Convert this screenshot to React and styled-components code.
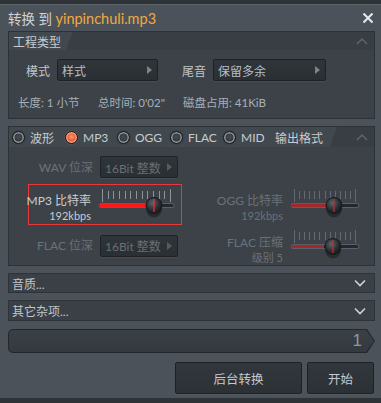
import React from "react";
import styled, { createGlobalStyle } from "styled-components";

const GlobalStyle = createGlobalStyle`
  html, body {
    margin: 0;
    padding: 0;
    background: #2b2f34;
  }
  body {
    font-family: "Lato", "Noto Sans CJK SC", sans-serif;
  }
`;

const Strip = styled.div`
  height: ${(p) => p.$h}px;
  width: 381px;
  background: #2e3338;
`;

const Window = styled.div`
  width: 381px;
  height: 394px;
  box-sizing: border-box;
  background: #4b525a;
  border-top: 1px solid #5c646b;
  display: flex;
  flex-direction: column;
  padding: 0 6px 0 8px;
`;

const TitleBar = styled.div`
  height: 26px;
  display: flex;
  align-items: center;
  justify-content: space-between;
  padding-right: 1px;
`;

const Title = styled.div`
  font-size: 13.5px;
  color: #cfd4d9;
  white-space: pre;
  & span {
    color: #f2a93b;
    font-size: 14.5px;
  }
`;

const Panel = styled.div`
  height: ${(p) => p.$h}px;
  margin-top: ${(p) => p.$mt || 0}px;
  box-sizing: border-box;
  background: #3c4248;
  border: 1px solid #2d3237;
  display: flex;
  flex-direction: column;
`;

const PanelHead = styled.div`
  height: ${(p) => p.$h}px;
  flex: none;
  display: flex;
  align-items: center;
  background: #383e44;
  padding-right: 6px;
`;

const Tab = styled.div`
  flex: none;
  white-space: nowrap;
  height: 100%;
  display: flex;
  align-items: center;
  padding: 0 ${(p) => p.$pr}px 0 ${(p) => p.$pl}px;
  background: #41484e;
  color: #c6ccd1;
  font-size: 12px;
  clip-path: polygon(0 0, 100% 0, calc(100% - 7px) 100%, 0 100%);
`;

const Caret = styled.svg`
  margin-left: auto;
`;

const Body1 = styled.div`
  padding: 9px 0 0 17px;
  display: flex;
  flex-direction: column;
`;

const Row = styled.div`
  display: flex;
  align-items: center;
`;

const FieldLabel = styled.span`
  font-size: 12px;
  color: #bfc6cc;
  margin: 0 7px 0 ${(p) => p.$ml || 0}px;
`;

const Select = styled.div`
  width: ${(p) => p.$w}px;
  height: 22px;
  box-sizing: border-box;
  background: linear-gradient(#30353a, #2a2f34);
  border: 1px solid #1e2226;
  border-radius: 2px;
  box-shadow: 0 1px 0 rgba(255, 255, 255, 0.05);
  display: flex;
  align-items: center;
  justify-content: space-between;
  padding: 0 5px 0 4px;
  font-size: 12px;
  white-space: nowrap;
  color: ${(p) => (p.$dim ? "#687077" : "#b7bec4")};
  &::after {
    content: "";
    border-left: 5px solid ${(p) => (p.$dim ? "#555c63" : "#7d858c")};
    border-top: 4px solid transparent;
    border-bottom: 4px solid transparent;
  }
`;

const InfoRow = styled.div`
  display: flex;
  margin: 13px 0 0 -8px;
  font-size: 11.5px;
  color: #a7afb6;
  white-space: nowrap;
`;

const InfoItem = styled.span`
  width: ${(p) => p.$w}px;
`;

const RadioItem = styled.span`
  display: flex;
  align-items: center;
  gap: 5px;
  width: ${(p) => p.$w}px;
`;

const Radio = styled.span`
  width: 13px;
  height: 13px;
  box-sizing: border-box;
  border-radius: 50%;
  border: 1px solid #1c1f22;
  background: ${(p) =>
    p.$on
      ? "radial-gradient(circle at 50% 45%, #ff9a72 0%, #ec5d33 45%, #b8361a 100%)"
      : "radial-gradient(circle at 50% 45%, #454b51 0%, #30353a 70%)"};
  box-shadow: inset 0 0 0 1.5px ${(p) => (p.$on ? "#f0a184" : "#8e969c")},
    0 0 2px ${(p) => (p.$on ? "rgba(255,120,80,0.5)" : "rgba(0,0,0,0.3)")};
`;

const Body2 = styled.div`
  padding: 9px 0 0 20px;
  display: grid;
  grid-template-columns: 153px 1fr;
  grid-template-rows: 22px 41px 29px;
  row-gap: 6px;
  column-gap: 26px;
`;

const Cell = styled.div`
  display: flex;
  align-items: center;
  box-sizing: border-box;
  border: 1px solid ${(p) => (p.$hl ? "#e5393a" : "transparent")};
  margin-left: ${(p) => (p.$hl ? -1 : 0)}px;
`;

const Label = styled.div`
  width: ${(p) => p.$w}px;
  flex: none;
  display: flex;
  flex-direction: column;
  align-items: flex-end;
  white-space: nowrap;
  margin-right: 7px;
  font-size: 12px;
  line-height: 15px;
  color: ${(p) => (p.$dim ? "#6a7279" : "#c9cfd4")};
  margin-top: ${(p) => p.$mt || 0}px;
`;

const Sub = styled.div`
  font-size: 11px;
  color: ${(p) => (p.$dim ? "#697178" : "#c6ccd1")};
`;

const Bar = styled.div`
  height: ${(p) => p.$h}px;
  margin-top: 7px;
  box-sizing: border-box;
  background: #3a4046;
  border: 1px solid #2e3338;
  display: flex;
  align-items: center;
  justify-content: space-between;
  padding: 0 8px 0 3px;
  font-size: 12px;
  color: #bfc6cc;
`;

const ProgressOuter = styled.div`
  height: 24px;
  margin-top: 8px;
  background: #23272b;
  border-radius: 5px 0 0 5px;
  clip-path: polygon(0 0, calc(100% - 8px) 0, 100% 50%, calc(100% - 8px) 100%, 0 100%);
  display: flex;
`;

const ProgressInner = styled.div`
  flex: 1;
  margin: 1px;
  border-radius: 4px 0 0 4px;
  background: linear-gradient(#3a4046, #33393f);
  clip-path: polygon(0 0, calc(100% - 8px) 0, 100% 50%, calc(100% - 8px) 100%, 0 100%);
  display: flex;
  align-items: center;
  justify-content: flex-end;
  padding-right: 12px;
  font-family: "Liberation Sans", sans-serif;
  font-size: 17px;
  font-weight: 300;
  color: #8f989f;
`;

const Buttons = styled.div`
  display: flex;
  justify-content: flex-end;
  gap: 5px;
  margin-top: 9px;
  padding-right: 1px;
`;

const Button = styled.button`
  width: ${(p) => p.$w}px;
  height: 32px;
  background: linear-gradient(#31373c, #2c3136);
  border: 1px solid #1d2125;
  border-radius: 2px;
  box-shadow: 0 1px 0 rgba(255, 255, 255, 0.05);
  font-family: "Noto Sans CJK SC", sans-serif;
  font-size: 12.5px;
  color: #c4cacf;
  padding: 0;
`;

const UpCaret = () => (
  <Caret width="12" height="8" viewBox="0 0 12 8">
    <polyline points="1,7 6,2 11,7" fill="none" stroke="#5d656c" strokeWidth="1.5" />
  </Caret>
);

const DownCaret = () => (
  <svg width="12" height="8" viewBox="0 0 12 8">
    <polyline points="1,1.5 6,6.5 11,1.5" fill="none" stroke="#cdd3d8" strokeWidth="1.6" />
  </svg>
);

const Slider = ({ w, knob, fill, dim }) => {
  const n = 13;
  const t0 = 4;
  const t1 = w - 5;
  const ticks = Array.from({ length: n }, (_, i) => t0 + ((t1 - t0) * i) / (n - 1));
  const tickCol = dim ? "#626a71" : "#8c949a";
  const red = dim ? "#a3282b" : "#ff1616";
  const id = `k${w}${knob}${dim ? "d" : "a"}`;
  return (
    <svg width={w} height="32" viewBox={`0 0 ${w} 32`}>
      <defs>
        <radialGradient id={id} cx="40%" cy="35%" r="70%">
          <stop offset="0%" stopColor="#5d646a" />
          <stop offset="60%" stopColor="#2a2e32" />
          <stop offset="100%" stopColor="#15181a" />
        </radialGradient>
      </defs>
      {ticks.map((x, i) => (
        <line
          key={i}
          x1={Math.round(x) + 0.5}
          x2={Math.round(x) + 0.5}
          y1={i === 0 || i === n - 1 ? 0 : 2}
          y2={i === 0 || i === n - 1 ? 13 : 10}
          stroke={tickCol}
          strokeWidth="1"
        />
      ))}
      <rect x="1" y="14.5" width={w - 2} height="4" rx="2" fill="#24282c" stroke="#656d74" strokeWidth="0.8" />
      <rect x="2" y="15" width={fill - 2} height="3" fill={red} />
      <ellipse cx={knob} cy="20" rx="8" ry="8.5" fill="rgba(0,0,0,0.35)" />
      <circle cx={knob} cy="16.5" r="8" fill={`url(#${id})`} stroke="#17191c" strokeWidth="1" />
      <line x1={knob} x2={knob} y1="10" y2="23" stroke={dim ? "#c23030" : "#ff2a2a"} strokeWidth="1.2" />
    </svg>
  );
};

const formats = [
  { name: "波形", on: false, w: 53 },
  { name: "MP3", on: true, w: 52 },
  { name: "OGG", on: false, w: 53 },
  { name: "FLAC", on: false, w: 53 },
  { name: "MID", on: false, w: 52 },
];

export default function App() {
  return (
    <>
      <GlobalStyle />
      <Strip $h={4} />
      <Window>
        <TitleBar>
          <Title>
            转换 到 <span>yinpinchuli.mp3</span>
          </Title>
          <svg width="12" height="12" viewBox="0 0 12 12">
            <path d="M1.5 1.5 L10.5 10.5 M10.5 1.5 L1.5 10.5" stroke="#e6eaee" strokeWidth="2" />
          </svg>
        </TitleBar>

        <Panel $h={88}>
          <PanelHead $h={18}>
            <Tab $pl={4} $pr={12}>工程类型</Tab>
            <UpCaret />
          </PanelHead>
          <Body1>
            <Row>
              <FieldLabel>模式</FieldLabel>
              <Select $w={101}>样式</Select>
              <FieldLabel $ml={24}>尾音</FieldLabel>
              <Select $w={113}>保留多余</Select>
            </Row>
            <InfoRow>
              <InfoItem $w={80}>长度: 1 小节</InfoItem>
              <InfoItem $w={85}>总时间: 0'02"</InfoItem>
              <InfoItem $w={120}>磁盘占用: 41KiB</InfoItem>
            </InfoRow>
          </Body1>
        </Panel>

        <Panel $h={140} $mt={7}>
          <PanelHead $h={20}>
            <Tab $pl={3} $pr={14}>
              {formats.map((f) => (
                <RadioItem key={f.name} $w={f.w}>
                  <Radio $on={f.on} />
                  {f.name}
                </RadioItem>
              ))}
              输出格式
            </Tab>
            <UpCaret />
          </PanelHead>
          <Body2>
            <Cell>
              <Label $w={63} $dim>WAV 位深</Label>
              <Select $w={78} $dim>16Bit 整数</Select>
            </Cell>
            <Cell />
            <Cell $hl>
              <Label $w={62} $mt={6}>
                MP3 比特率
                <Sub>192kbps</Sub>
              </Label>
              <Slider w={77} knob={56} fill={50} />
            </Cell>
            <Cell>
              <Label $w={74} $mt={6} $dim>
                OGG 比特率
                <Sub $dim>192kbps</Sub>
              </Label>
              <Slider w={70} knob={44} fill={36} dim />
            </Cell>
            <Cell>
              <Label $w={63} $dim>FLAC 位深</Label>
              <Select $w={78} $dim>16Bit 整数</Select>
            </Cell>
            <Cell>
              <Label $w={74} $mt={8} $dim>
                FLAC 压缩
                <Sub $dim>级别 5</Sub>
              </Label>
              <Slider w={70} knob={43} fill={34} dim />
            </Cell>
          </Body2>
        </Panel>

        <Bar $h={20}>
          音质...
          <DownCaret />
        </Bar>
        <Bar $h={21}>
          其它杂项...
          <DownCaret />
        </Bar>

        <ProgressOuter>
          <ProgressInner>1</ProgressInner>
        </ProgressOuter>

        <Buttons>
          <Button $w={127}>后台转换</Button>
          <Button $w={67}>开始</Button>
        </Buttons>
      </Window>
      <Strip $h={5} />
    </>
  );
}
